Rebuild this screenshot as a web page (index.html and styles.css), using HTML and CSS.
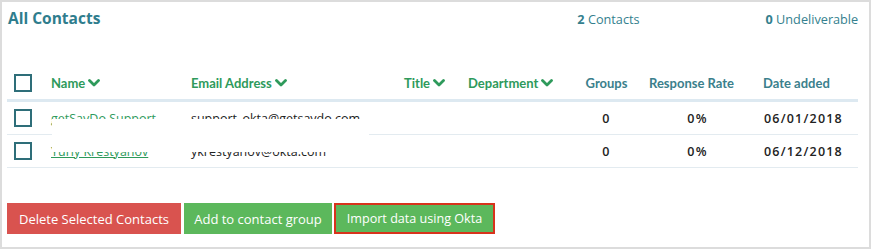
FILE: index.html
```html
<!DOCTYPE html>
<html>
<head>
<meta charset="utf-8">
<link rel="stylesheet" href="styles.css">
</head>
<body>
<div class="frame">
  <div class="top">
    <h1 class="title">All Contacts</h1>
    <div class="count count-contacts"><b>2</b> Contacts</div>
    <div class="count count-undeliv"><b>0</b> Undeliverable</div>
  </div>

  <div class="table">
    <div class="row head">
      <div class="cell c-check"><span class="box"></span></div>
      <div class="cell c-name sortable">Name <svg class="chev" viewBox="0 0 12 8"><polyline points="1.5,1.5 6,6 10.5,1.5"/></svg></div>
      <div class="cell c-email sortable">Email Address <svg class="chev" viewBox="0 0 12 8"><polyline points="1.5,1.5 6,6 10.5,1.5"/></svg></div>
      <div class="cell c-title sortable">Title <svg class="chev" viewBox="0 0 12 8"><polyline points="1.5,1.5 6,6 10.5,1.5"/></svg></div>
      <div class="cell c-dept sortable">Department <svg class="chev" viewBox="0 0 12 8"><polyline points="1.5,1.5 6,6 10.5,1.5"/></svg></div>
      <div class="cell c-groups plain">Groups</div>
      <div class="cell c-rate plain">Response Rate</div>
      <div class="cell c-date plain">Date added</div>
    </div>
    <div class="row body">
      <div class="cell c-check"><span class="box"></span></div>
      <div class="cell c-name"><a class="link">getSayDo Support</a></div>
      <div class="cell c-email">support_okta@getsaydo.com</div>
      <div class="cell c-title"></div>
      <div class="cell c-dept"></div>
      <div class="cell c-groups num">0</div>
      <div class="cell c-rate num">0%</div>
      <div class="cell c-date num">06/01/2018</div>
    </div>
    <div class="row body">
      <div class="cell c-check"><span class="box"></span></div>
      <div class="cell c-name"><a class="link">Yuriy Krestyanov</a></div>
      <div class="cell c-email">ykrestyanov@okta.com</div>
      <div class="cell c-title"></div>
      <div class="cell c-dept"></div>
      <div class="cell c-groups num">0</div>
      <div class="cell c-rate num">0%</div>
      <div class="cell c-date num">06/12/2018</div>
    </div>
    <div class="redact"></div>
  </div>

  <div class="actions">
    <button class="btn btn-red">Delete Selected Contacts</button>
    <button class="btn btn-green btn-add">Add to contact group</button>
    <button class="btn btn-green btn-outlined">Import data using Okta</button>
  </div>
</div>
</body>
</html>
```

FILE: styles.css
```css
* { box-sizing: border-box; }
html, body { margin: 0; padding: 0; background: #fff; }
body { font-family: "Open Sans", "Liberation Sans", sans-serif; }

.frame {
  width: 871px;
  height: 249px;
  border: 2px solid #dcdcdc;
  padding: 0 0 0 5px;
  overflow: hidden;
}

.top {
  display: flex;
  align-items: baseline;
  height: 64px;
  padding-top: 5px;
}
.title {
  margin: 0;
  font-family: "Open Sans", sans-serif;
  font-weight: 700;
  font-size: 15.5px;
  color: #2f7d8d;
  padding-left: 1px;
  flex: 0 0 auto;
}
.count {
  font-size: 12.7px;
  color: #347f8e;
}
.count b { font-weight: 700; }
.count-contacts { margin-left: 477px; }
.count-undeliv { margin-left: 126px; }

.table {
  position: relative;
  width: 851px;
}
.row {
  display: grid;
  grid-template-columns: 44px 140px 213px 64px 106px 65px 105px 114px;
  align-items: center;
}
.head {
  height: 36px;
  border-bottom: 3px solid #dde9f1;
  font-family: Lato, sans-serif;
  font-weight: 700;
  font-size: 13px;
}
.body {
  height: 33px;
  border-bottom: 1px solid #e3ebf0;
  font-size: 12.5px;
  color: #222;
}
.cell { white-space: nowrap; }
.c-check { padding-left: 7px; display: flex; align-items: center; }
.box {
  display: block;
  width: 18px;
  height: 18px;
  border: 2px solid #2e6e79;
}
.sortable { color: #2e9a5b; display: flex; align-items: center; }
.chev { width: 12px; height: 8px; margin-left: 3px; margin-top: 1px; }
.chev polyline { fill: none; stroke: #2e9a5b; stroke-width: 2.8; stroke-linecap: round; stroke-linejoin: round; }
.plain { color: #3b808c; }
.c-groups { text-align: center; }
.c-rate { text-align: center; }
.c-date { padding-left: 19px; }

.num {
  font-family: "Open Sans", sans-serif;
  font-weight: 600;
  font-size: 12.5px;
  letter-spacing: 1.2px;
  color: #222;
}
.body .c-rate { padding-left: 12px; }
.body .c-date { padding-left: 20px; }

.link { color: #2e9a5b; text-decoration: underline; }

.redact {
  position: absolute;
  left: 45px;
  top: 53px;
  width: 317px;
  height: 33px;
  background: #fff;
}

.actions {
  display: flex;
  gap: 3px;
  margin-top: 35px;
}
.btn {
  height: 31px;
  border: 0;
  color: #fff;
  font-family: "Open Sans", sans-serif;
  font-size: 13px;
  padding: 0;
  text-align: center;
}
.btn-red { background: #d9534f; width: 174px; }
.btn-green { background: #5cb85c; }
.btn-add { width: 148px; }
.btn-outlined { border: 2px solid #d7331c; width: 161px; margin-left: -1px; font-size: 12.6px; }
```
